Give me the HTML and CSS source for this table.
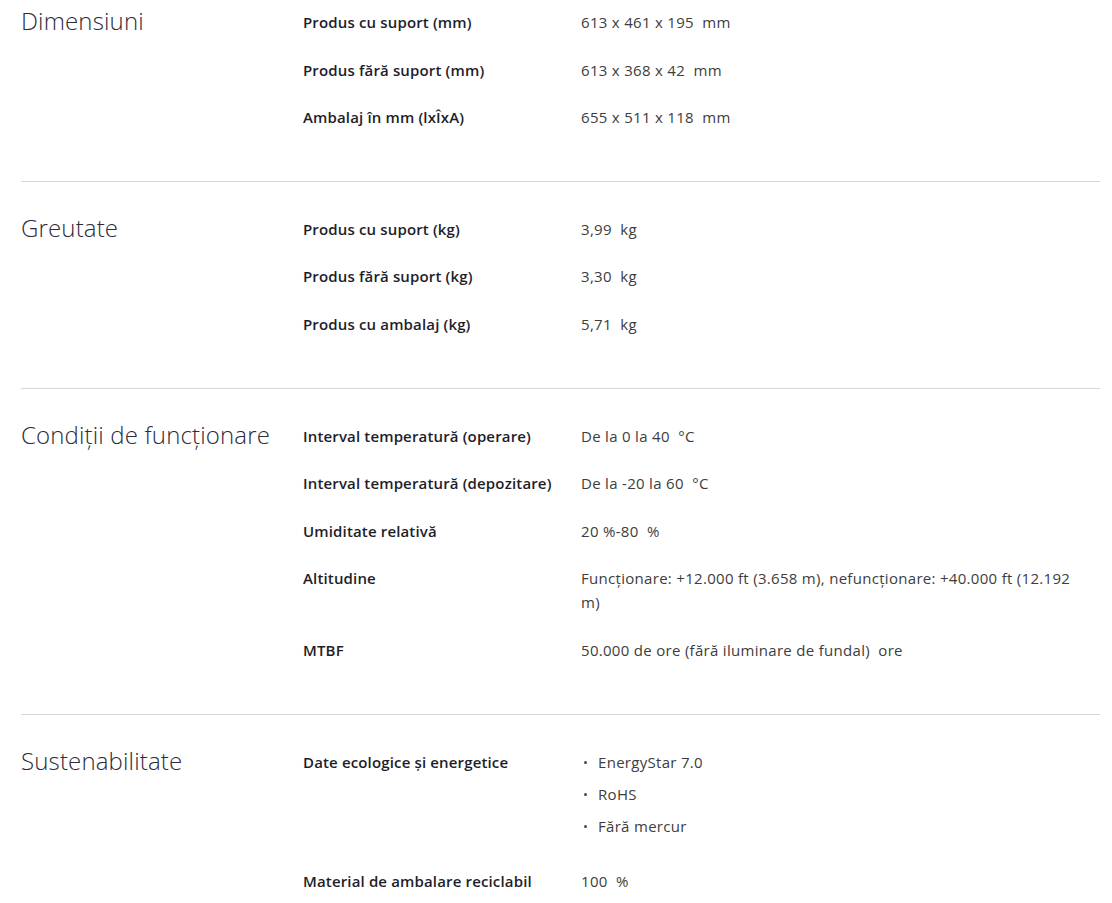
FILE: index.html
```html
<!DOCTYPE html>
<html lang="ro">
<head>
<meta charset="utf-8">
<link rel="stylesheet" href="styles.css">
</head>
<body>
<div class="specs">
  <section class="group first">
    <h2 class="group-title">Dimensiuni</h2>
    <div class="rows">
      <div class="row"><div class="label">Produs cu suport (mm)</div><div class="value">613 x 461 x 195&nbsp; mm</div></div>
      <div class="row"><div class="label">Produs fără suport (mm)</div><div class="value">613 x 368 x 42&nbsp; mm</div></div>
      <div class="row"><div class="label">Ambalaj în mm (lxÎxA)</div><div class="value">655 x 511 x 118&nbsp; mm</div></div>
    </div>
  </section>
  <section class="group">
    <h2 class="group-title">Greutate</h2>
    <div class="rows">
      <div class="row"><div class="label">Produs cu suport (kg)</div><div class="value">3,99&nbsp; kg</div></div>
      <div class="row"><div class="label">Produs fără suport (kg)</div><div class="value">3,30&nbsp; kg</div></div>
      <div class="row"><div class="label">Produs cu ambalaj (kg)</div><div class="value">5,71&nbsp; kg</div></div>
    </div>
  </section>
  <section class="group">
    <h2 class="group-title">Condiții de funcționare</h2>
    <div class="rows">
      <div class="row"><div class="label">Interval temperatură (operare)</div><div class="value">De la 0 la 40&nbsp; °C</div></div>
      <div class="row"><div class="label">Interval temperatură (depozitare)</div><div class="value">De la -20 la 60&nbsp; °C</div></div>
      <div class="row"><div class="label">Umiditate relativă</div><div class="value">20 %-80&nbsp; %</div></div>
      <div class="row"><div class="label">Altitudine</div><div class="value">Funcționare: +12.000 ft (3.658 m), nefuncționare: +40.000 ft (12.192 m)</div></div>
      <div class="row"><div class="label">MTBF</div><div class="value">50.000 de ore (fără iluminare de fundal)&nbsp; ore</div></div>
    </div>
  </section>
  <section class="group last">
    <h2 class="group-title">Sustenabilitate</h2>
    <div class="rows">
      <div class="row"><div class="label">Date ecologice și energetice</div>
        <ul class="value bullets">
          <li>EnergyStar 7.0</li>
          <li>RoHS</li>
          <li>Fără mercur</li>
        </ul>
      </div>
      <div class="row"><div class="label">Material de ambalare reciclabil</div><div class="value">100&nbsp; %</div></div>
    </div>
  </section>
</div>
</body>
</html>
```

FILE: styles.css
```css
* { box-sizing: border-box; }
html, body { margin: 0; padding: 0; background: #ffffff; }
body {
  font-family: "Open Sans", "Liberation Sans", sans-serif;
  color: #3a3a3a;
}
.specs {
  padding: 0 12px 0 21px;
}
.group {
  display: grid;
  grid-template-columns: 282px 1fr;
  padding: 35px 0 28px;
  border-bottom: 1px solid #d6d6d6;
}
.group.first { padding-top: 10px; }
.group.last { border-bottom: none; }
.group-title {
  margin: -1px 0 0;
  font-size: 24px;
  font-weight: 300;
  line-height: 24px;
  color: #2b2b3a;
  letter-spacing: 0.15px;
}
.rows {
  display: flex;
  flex-direction: column;
}
.row {
  display: grid;
  grid-template-columns: 278px 1fr;
  font-size: 15px;
  line-height: 24px;
  margin-bottom: 23.6px;
}
.label {
  font-weight: 600;
  color: #1e1e2a;
  letter-spacing: 0.15px;
}
.value {
  color: #3d3d3d;
  letter-spacing: 0.3px;
  padding-right: 12px;
}
.bullets {
  list-style: none;
  margin: 0;
  padding-top: 0;
  padding-bottom: 0;
  padding-left: 0;
}
.bullets li {
  position: relative;
  padding-left: 17px;
  margin-bottom: 8px;
}
.bullets li::before {
  content: "";
  position: absolute;
  left: 3px;
  top: 11px;
  width: 3px;
  height: 3px;
  border-radius: 50%;
  background: #4a4a4a;
}
```
